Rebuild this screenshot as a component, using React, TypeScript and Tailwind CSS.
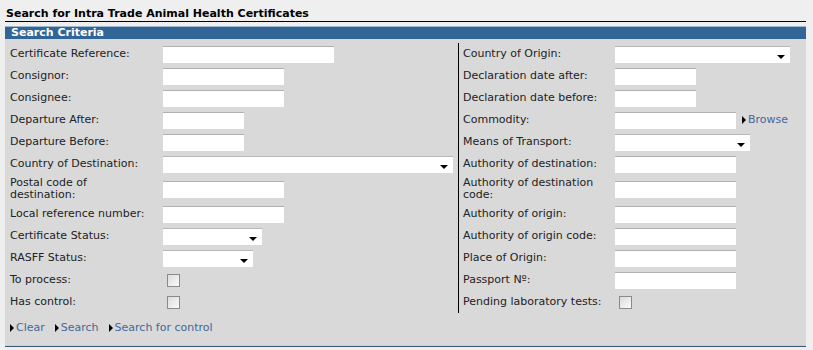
import React from "react";

type Field = {
  label: string;
  kind: "text" | "select" | "check";
  width?: number;
  tall?: boolean;
  browse?: boolean;
};

const LEFT: Field[] = [
  { label: "Certificate Reference:", kind: "text", width: 171 },
  { label: "Consignor:", kind: "text", width: 121 },
  { label: "Consignee:", kind: "text", width: 121 },
  { label: "Departure After:", kind: "text", width: 81 },
  { label: "Departure Before:", kind: "text", width: 81 },
  { label: "Country of Destination:", kind: "select", width: 290 },
  { label: "Postal code of destination:", kind: "text", width: 121, tall: true },
  { label: "Local reference number:", kind: "text", width: 121 },
  { label: "Certificate Status:", kind: "select", width: 99 },
  { label: "RASFF Status:", kind: "select", width: 90 },
  { label: "To process:", kind: "check" },
  { label: "Has control:", kind: "check" },
];

const RIGHT: Field[] = [
  { label: "Country of Origin:", kind: "select", width: 175 },
  { label: "Declaration date after:", kind: "text", width: 81 },
  { label: "Declaration date before:", kind: "text", width: 81 },
  { label: "Commodity:", kind: "text", width: 121, browse: true },
  { label: "Means of Transport:", kind: "select", width: 135 },
  { label: "Authority of destination:", kind: "text", width: 121 },
  { label: "Authority of destination code:", kind: "text", width: 121, tall: true },
  { label: "Authority of origin:", kind: "text", width: 121 },
  { label: "Authority of origin code:", kind: "text", width: 121 },
  { label: "Place of Origin:", kind: "text", width: 121 },
  { label: "Passport Nº:", kind: "text", width: 121 },
  { label: "Pending laboratory tests:", kind: "check" },
];

function Arrow() {
  return <span className="inline-block w-0 h-0 border-y-[4px] border-y-transparent border-l-[4px] border-l-black mr-[2px]" />;
}

function Control({ f }: { f: Field }) {
  if (f.kind === "check") {
    return (
      <span className="ml-[4px] block w-[13px] h-[13px] border border-[#8a8a8a] bg-[linear-gradient(135deg,#dcdcdc,#fafafa)]" />
    );
  }
  if (f.kind === "select") {
    return (
      <span
        className="relative block h-[17px] bg-white border-t border-[#b8b8b8]"
        style={{ width: f.width }}
      >
        <span className="absolute right-[5px] top-[8px] w-0 h-0 border-x-[4px] border-x-transparent border-t-[4px] border-t-black" />
      </span>
    );
  }
  return (
    <span className="flex items-center">
      <span className="block h-[17px] bg-white border-t border-[#b0b0b0]" style={{ width: f.width }} />
      {f.browse && (
        <span className="ml-[6px] flex items-center text-[#44689a]">
          <Arrow />
          Browse
        </span>
      )}
    </span>
  );
}

function Row({ f, labelW }: { f: Field; labelW: string }) {
  return (
    <div className={`flex items-center ${f.tall ? "h-[28px]" : "h-[22px]"}`}>
      <div className={`${labelW} pr-[10px] leading-[12px] text-[#222]`}>{f.label}</div>
      <Control f={f} />
    </div>
  );
}

export default function App() {
  return (
    <div className="w-[813px] h-[350px] bg-[#efefef] font-['DejaVu_Sans',Verdana,sans-serif] text-[11px] overflow-hidden">
      <div className="pl-[5px] pr-[7px] pt-[8px]">
        <div className="font-bold text-black leading-[12px] pl-[1px] border-b border-black pb-[1px]">
          Search for Intra Trade Animal Health Certificates
        </div>
        <div className="mt-[4px] h-[13px] bg-[#316598] border-t border-[#9fb8d0] text-white font-bold leading-[11px] pl-[6px]">
          Search Criteria
        </div>
        <div className="bg-[#d9d9d9] h-[307px] border-b border-[#c4d3e3] flex flex-col">
          <div className="flex pt-[4px]">
            <div className="w-[453px] pl-[5px]">
              {LEFT.map((f) => (
                <Row key={f.label} f={f} labelW="w-[153px]" />
              ))}
            </div>
            <div className="flex-1 pl-[4px] border-l border-black">
              {RIGHT.map((f) => (
                <Row key={f.label} f={f} labelW="w-[152px]" />
              ))}
            </div>
          </div>
          <div className="flex gap-[10px] pl-[5px] mt-[7px] text-[#44689a]">
            <span className="flex items-center"><Arrow />Clear</span>
            <span className="flex items-center"><Arrow />Search</span>
            <span className="flex items-center"><Arrow />Search for control</span>
          </div>
        </div>
        <div className="h-[1px] bg-[#3a5778]" />
      </div>
    </div>
  );
}
